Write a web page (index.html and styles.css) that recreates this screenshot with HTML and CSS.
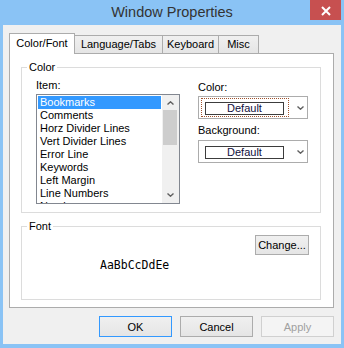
FILE: index.html
```html
<!DOCTYPE html>
<html lang="en">
    <head>
        <meta charset="utf-8">
        <title>Window Properties</title>
        <link rel="stylesheet" href="styles.css">
    </head>
    <body>
        <div class="window">
            <div class="titlebar">
                <span class="title">Window Properties</span>
                <span class="close">
                    <svg width="31" height="20" viewBox="0 0 31 20"><path d="M12 7 L20 15 M20 7 L12 15" stroke="#fff" stroke-width="2" fill="none"/></svg>
                </span>
            </div>

            <div class="client">
                <div class="tabs">
                    <div class="tab tab-active tab-color">Color/Font</div>
                    <div class="tab tab-lang">Language/Tabs</div>
                    <div class="tab tab-keys">Keyboard</div>
                    <div class="tab tab-misc">Misc</div>
                </div>

                <div class="panel">
                    <fieldset class="group group-color">
                        <legend>Color</legend>
                        <div class="color-cols">
                            <div class="item-col">
                                <div class="label">Item:</div>
                                <div class="listbox">
                                    <ul class="items">
                                        <li class="selected">Bookmarks</li>
                                        <li>Comments</li>
                                        <li>Horz Divider Lines</li>
                                        <li>Vert Divider Lines</li>
                                        <li>Error Line</li>
                                        <li>Keywords</li>
                                        <li>Left Margin</li>
                                        <li>Line Numbers</li>
                                        <li>Numbers</li>
                                    </ul>
                                    <div class="scrollbar">
                                        <div class="arrow arrow-up">
                                            <svg width="7" height="4" viewBox="0 0 7 4"><path d="M0.5 3.5 L3.5 0.8 L6.5 3.5" stroke="#606060" stroke-width="1.4" fill="none"/></svg>
                                        </div>
                                        <div class="thumb"></div>
                                        <div class="track"></div>
                                        <div class="arrow arrow-down">
                                            <svg width="7" height="4" viewBox="0 0 7 4"><path d="M0.5 0.5 L3.5 3.2 L6.5 0.5" stroke="#606060" stroke-width="1.4" fill="none"/></svg>
                                        </div>
                                    </div>
                                </div>
                            </div>

                            <div class="pick-col">
                                <div class="label">Color:</div>
                                <div class="combo">
                                    <div class="combo-field focused">
                                        <div class="swatch">Default</div>
                                    </div>
                                    <svg class="chevron" width="7" height="4" viewBox="0 0 7 4"><path d="M0.5 0.5 L3.5 3.2 L6.5 0.5" stroke="#606060" stroke-width="1.4" fill="none"/></svg>
                                </div>
                                <div class="label label-bg">Background:</div>
                                <div class="combo combo-bg">
                                    <div class="combo-field">
                                        <div class="swatch">Default</div>
                                    </div>
                                    <svg class="chevron" width="7" height="4" viewBox="0 0 7 4"><path d="M0.5 0.5 L3.5 3.2 L6.5 0.5" stroke="#606060" stroke-width="1.4" fill="none"/></svg>
                                </div>
                            </div>
                        </div>
                    </fieldset>

                    <fieldset class="group group-font">
                        <legend>Font</legend>
                        <div class="font-row">
                            <button class="btn btn-change">Change...</button>
                        </div>
                        <div class="sample">AaBbCcDdEe</div>
                    </fieldset>
                </div>

                <div class="actions">
                    <button class="btn btn-default">OK</button>
                    <button class="btn">Cancel</button>
                    <button class="btn" disabled>Apply</button>
                </div>
            </div>
        </div>
    </body>
</html>
```

FILE: styles.css
```css
body {
    margin: 0;
    padding: 0;
    font-family: "Liberation Sans", Arial, sans-serif;
    font-size: 11px;
    color: #000000;
}

.window {
    width: 344px;
    height: 348px;
    box-sizing: border-box;
    background-color: #8ac3f5;
    padding: 0 3px 4px 3px;
}

.titlebar {
    display: grid;
    grid-template-columns: 1fr auto 1fr;
    height: 25px;
    margin: 0 -3px 0 -3px;
    padding: 0 3px;
}

.title {
    grid-column: 2;
    font-size: 14.5px;
    line-height: 25px;
    color: #333333;
}

.close {
    grid-column: 3;
    justify-self: end;
    width: 31px;
    height: 20px;
    background-color: #c75050;
}

.close svg {
    display: block;
}

.client {
    height: 319px;
    box-sizing: border-box;
    background-color: #f0f0f0;
    padding: 8px 7px 7px 6px;
}

/* tab strip */
.tabs {
    display: flex;
    align-items: flex-end;
    height: 20px;
}

.tab {
    box-sizing: border-box;
    height: 18px;
    line-height: 17px;
    text-align: center;
    border: 1px solid #acacac;
    border-bottom: none;
    background: linear-gradient(#f0f0f0, #e5e5e5);
    margin-left: -1px;
}

.tab-active {
    position: relative;
    z-index: 1;
    height: 21px;
    margin-bottom: -1px;
    margin-left: 0;
    padding-top: 1px;
    background: #ffffff;
}

.tab-color { width: 66px; }
.tab-lang { width: 89px; }
.tab-keys { width: 57px; }
.tab-misc { width: 41px; }

.panel {
    box-sizing: border-box;
    height: 255px;
    border: 1px solid #acacac;
    background-color: #ffffff;
    padding: 6px 12px 0 11px;
}

/* group boxes */
.group {
    margin: 0;
    min-width: 0;
    border: 1px solid #dcdcdc;
    padding: 3px 11px 8px 14px;
}

.group legend {
    padding: 0 2px;
    margin-left: -9px;
    line-height: 15px;
}

.group-font {
    margin-top: 6px;
    padding-top: 1px;
    padding-bottom: 26px;
}

.color-cols {
    display: flex;
    gap: 18px;
}

.label {
    line-height: 15px;
}

.item-col {
    width: 144px;
}

.listbox {
    display: flex;
    box-sizing: border-box;
    height: 110px;
    margin-top: 1px;
    border: 1px solid #828790;
    background-color: #ffffff;
}

.items {
    flex: 1;
    list-style: none;
    margin: 0;
    padding: 1px;
    overflow: hidden;
}

.items li {
    height: 13px;
    line-height: 13px;
    padding-left: 2px;
    white-space: nowrap;
}

.items .selected {
    background-color: #3399ff;
    color: #ffffff;
}

.scrollbar {
    display: flex;
    flex-direction: column;
    width: 17px;
    background-color: #f0f0f0;
}

.arrow {
    display: flex;
    align-items: center;
    justify-content: center;
    height: 15px;
}

.arrow-down {
    height: 17px;
}

.thumb {
    height: 35px;
    margin: 0 2px 0 1px;
    background-color: #cdcdcd;
}

.track {
    flex: 1;
}

/* combo boxes */
.pick-col {
    width: 110px;
    padding-top: 2px;
}

.combo {
    display: flex;
    align-items: center;
    box-sizing: border-box;
    height: 23px;
    margin-top: 1px;
    border: 1px solid #acacac;
    background-color: #ffffff;
}

.combo-bg {
    margin-top: 2px;
}

.label-bg {
    margin-top: 4px;
}

.combo-field {
    box-sizing: border-box;
    width: 88px;
    height: 19px;
    margin-left: 2px;
    padding: 3px;
    border: 1px dotted transparent;
}

.focused {
    border-color: #a0522d;
}

.swatch {
    box-sizing: border-box;
    width: 79px;
    height: 13px;
    line-height: 11px;
    text-align: center;
    border: 1px solid #3c3c3c;
    color: #101040;
}

.chevron {
    margin-left: 8px;
}

/* font group */
.font-row {
    display: flex;
    justify-content: flex-end;
}

.sample {
    margin-top: 3px;
    padding-left: 64px;
    line-height: 15px;
    font-family: "DejaVu Sans Mono", monospace;
    font-size: 11.5px;
}

/* buttons */
.btn {
    box-sizing: border-box;
    width: 73px;
    height: 21px;
    padding: 0;
    font-family: "Liberation Sans", Arial, sans-serif;
    font-size: 11px;
    color: #000000;
    border: 1px solid #acacac;
    border-radius: 0;
    background: linear-gradient(#f0f0f0, #e5e5e5);
}

.btn-change {
    width: 54px;
    height: 20px;
}

.btn-default {
    border-color: #3399ff;
}

.btn:disabled {
    color: #a0a0a0;
    border-color: #d0d0d0;
    background: #f4f4f4;
}

.actions {
    display: flex;
    justify-content: flex-end;
    gap: 8px;
    margin-top: 8px;
}
```
